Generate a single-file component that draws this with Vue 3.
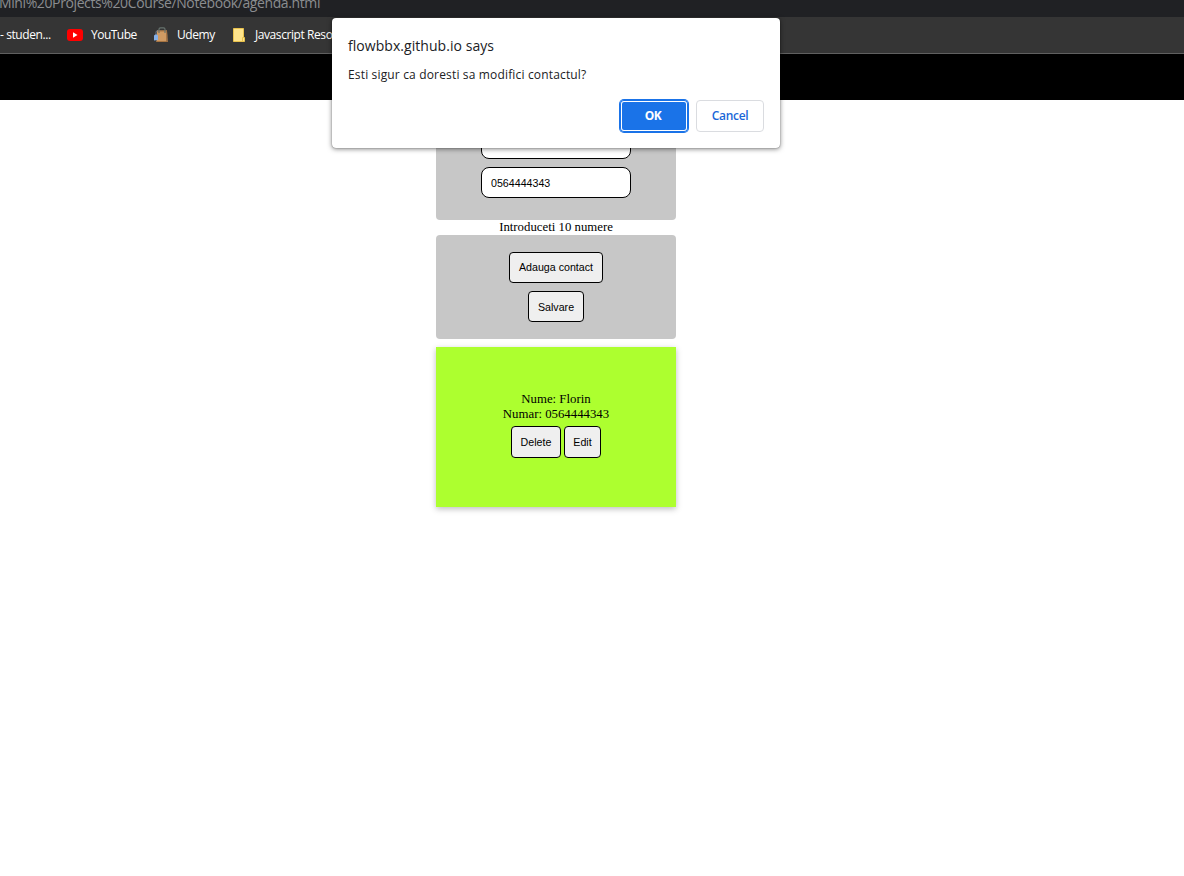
<script setup>
const contact = { name: 'Florin', number: '0564444343' }
</script>

<template>
  <div class="window">
    <div class="address"><span class="url">Mini%20Projects%20Course/Notebook/agenda.html</span></div>
    <nav class="bookmarks">
      <span class="mark student">- studen...</span>
      <svg class="icon" width="16" height="16" viewBox="0 0 16 16">
        <rect x="0" y="2" width="16" height="12" rx="3" fill="#f00" />
        <path d="M6 5.3 10.500 8 6 10.700Z" fill="#fff" />
      </svg>
      <span class="mark youtube">YouTube</span>
      <svg class="icon" width="16" height="16" viewBox="0 0 16 16">
        <path d="M3 3.500h10l.6 11.500H2.500Z" fill="#cf9a63" />
        <path d="M3 3.500h10v1H3ZM2.500 14h11v1h-11Z" fill="#a87542" />
        <path d="M12.200 3.500h.8l.6 11.500h-1.400Z" fill="#9c6c40" />
        <path d="M5 6V2.200Q5 .8 6.500 .8h3q1.500 0 1.500 1.400V6" fill="none" stroke="#67736e" stroke-width="1.200" />
        <path d="M0 8.500 2 7l2 1.500V13l-4 .5Z" fill="#85b0e8" />
        <path d="M2 7V4.500L4 3.500" fill="none" stroke="#748699" stroke-width=".8" />
      </svg>
      <span class="mark udemy">Udemy</span>
      <svg class="icon" width="13" height="14" viewBox="0 0 13 14">
        <path d="M.5.500h10v9h1v4H.5Z" fill="#ffe48b" stroke="#e9c24c" />
        <path d="M9.500 13V9.500h1.500" fill="none" stroke="#e9c24c" />
      </svg>
      <span class="mark js">Javascript Resources</span>
    </nav>
    <header class="banner"></header>

    <main class="page">
      <section class="panel fields">
        <input class="field" aria-label="Nume">
        <input class="field" aria-label="Numar" :value="contact.number">
      </section>
      <p class="hint">Introduceti 10 numere</p>
      <section class="panel actions">
        <button class="btn add">Adauga contact</button>
        <button class="btn save">Salvare</button>
      </section>
      <section class="card">
        <div>Nume: {{ contact.name }}</div>
        <div>Numar: {{ contact.number }}</div>
        <div class="row">
          <button class="btn delete">Delete</button>
          <button class="btn edit">Edit</button>
        </div>
      </section>
    </main>

    <div class="dialog" role="dialog">
      <div class="title">flowbbx.github.io says</div>
      <div class="message">Esti sigur ca doresti sa modifici contactul?</div>
      <div class="buttons">
        <button class="ok">OK</button>
        <button class="cancel">Cancel</button>
      </div>
    </div>
  </div>
</template>

<style>
body { background: #fff; }
</style>

<style scoped>
* { box-sizing: border-box; }
.window {
  position: relative;
  width: 1184px;
  height: 876px;
  overflow: hidden;
  background: #fff;
  color: #000;
}
.address {
  display: flex;
  align-items: flex-end;
  height: 17px;
  background: #202124;
  color: #8b8d90;
  font: 14px/20px "Open Sans", sans-serif;
}
.url { margin: 0 0 4px -1px; white-space: nowrap; letter-spacing: -0.39px; }
.bookmarks {
  display: flex;
  align-items: center;
  height: 37px;
  overflow: hidden;
  background: #353535;
  border-bottom: 1px solid #606060;
  color: #fff;
  font: 12px/16px "Open Sans", sans-serif;
  white-space: nowrap;
}
.mark { flex: none; letter-spacing: -0.42px; }
.icon { flex: none; }
.student { width: 67px; }
.youtube { width: 63px; margin-left: 8px; letter-spacing: -0.52px; }
.udemy { width: 56px; margin-left: 7px; letter-spacing: -0.45px; }
.js { margin-left: 9px; letter-spacing: -0.42px; }
.banner { height: 46px; background: #000; }

.page {
  width: 240px;
  margin-left: 436px;
  font: 12.8px/15px "Liberation Serif", serif;
  text-align: center;
}
.panel {
  display: flex;
  flex-direction: column;
  align-items: center;
  gap: 8px;
  background: #c7c7c7;
  border-radius: 4px;
}
.fields { height: 120px; padding-top: 28px; }
.field {
  width: 150px;
  height: 31px;
  padding: 1px 9px 0;
  border: 1px solid #000;
  border-radius: 8px;
  background: #fff;
  font: 10.667px "Liberation Sans", sans-serif;
}
.hint { margin: 0; height: 15px; }
.actions { height: 104px; padding-top: 17px; }
.btn {
  height: 31px;
  padding: 0;
  border: 1px solid #000;
  border-radius: 4px;
  background: #efefef;
  color: #000;
  font: 10.667px "Liberation Sans", sans-serif;
}
.add { width: 94px; padding-bottom: 2px; }
.save { width: 56px; }
.card {
  height: 160px;
  margin-top: 8px;
  padding-top: 45px;
  background: #adff2f;
  box-shadow: 0 2px 6px rgba(0, 0, 0, .26);
}
.row { display: flex; justify-content: center; gap: 3px; margin-top: 4px; }
.row .btn { height: 32px; }
.delete { width: 50px; }
.edit { width: 37px; }

.dialog {
  position: absolute;
  left: 332px;
  top: 18px;
  width: 448px;
  height: 130px;
  padding: 17px 16px 0;
  border-radius: 4px;
  background: #fff;
  box-shadow: 0 0 1px rgba(0, 0, 0, .6), 0 1px 5px rgba(0, 0, 0, .5);
  font-family: "Open Sans", sans-serif;
  color: #202124;
  white-space: nowrap;
}
.title { height: 22px; font-size: 14px; line-height: 22px; letter-spacing: 0.05px; }
.message { height: 18px; margin-top: 9px; font-size: 12px; line-height: 18px; letter-spacing: 0.16px; }
.buttons { display: flex; justify-content: flex-end; align-items: center; gap: 8px; margin-top: 16px; }
.buttons button {
  width: 68px;
  height: 32px;
  padding: 0 0 1px;
  border-radius: 4px;
  font: 600 12px "Open Sans", sans-serif;
}
.buttons .ok {
  padding-right: 2px;
  border: 0;
  background: #1a73e8;
  box-shadow: 0 0 0 1px #1a73e8, inset 0 0 0 1px #1a73e8, inset 0 0 0 2px #fff;
  color: #fff;
  font-weight: 700;
  letter-spacing: -0.4px;
}
.cancel { border: 1px solid #dadce0; background: #fff; color: #1a67d8; letter-spacing: -0.3px; }
</style>
